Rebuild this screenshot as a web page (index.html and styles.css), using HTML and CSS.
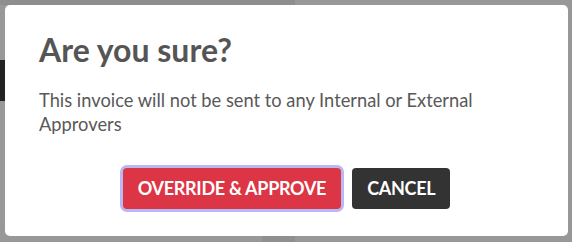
FILE: index.html
```html
<!DOCTYPE html>
<html lang="en">
<head>
<meta charset="utf-8">
<title>Are you sure?</title>
<link rel="stylesheet" href="styles.css">
</head>
<body>
<div class="page">
  <div class="topbar"></div>
  <div class="sidebar-item"></div>
  <div class="bottom-col"></div>
</div>
<div class="modal" role="dialog">
  <h1 class="modal-title">Are you sure?</h1>
  <p class="modal-text">This invoice will not be sent to any Internal or External Approvers</p>
  <div class="modal-actions">
    <button class="btn btn-danger">OVERRIDE &amp; APPROVE</button>
    <button class="btn btn-dark">CANCEL</button>
  </div>
</div>
</body>
</html>
```

FILE: styles.css
```css
html, body {
  margin: 0;
  padding: 0;
}
body {
  width: 572px;
  height: 242px;
  overflow: hidden;
  background: #989898;
  font-family: Lato, "Open Sans", "Liberation Sans", sans-serif;
  position: relative;
}
.page {
  display: flex;
  flex-direction: column;
  height: 242px;
}
.topbar {
  width: 295px;
  height: 5px;
  background: #8e8e8e;
}
.sidebar-item {
  width: 20px;
  height: 41px;
  margin-top: 55px;
  background: #222222;
}
.bottom-col {
  margin-top: auto;
  margin-left: 262px;
  width: 33px;
  height: 6px;
  background: #8f8f8f;
}
.modal {
  position: absolute;
  left: 5px;
  top: 5px;
  width: 563px;
  height: 231px;
  box-sizing: border-box;
  padding: 26px 34px 27px;
  background: #ffffff;
  border-radius: 5px;
  color: #555555;
}
.modal-title {
  margin: 0 0 19px;
  font-size: 32px;
  line-height: 38px;
  font-weight: 700;
  color: #555555;
}
.modal-text {
  margin: 0 0 32px;
  font-size: 18.3px;
  line-height: 24px;
  color: #595959;
}
.modal-actions {
  display: flex;
  justify-content: center;
  gap: 11px;
}
.btn {
  font-family: Lato, "Open Sans", "Liberation Sans", sans-serif;
  font-size: 18px;
  font-weight: 700;
  line-height: 27px;
  height: 41px;
  padding: 7px 15px;
  border: none;
  border-radius: 4px;
  color: #ffffff;
  box-sizing: border-box;
  letter-spacing: -0.3px;
}
.btn-danger {
  background: #dc3545;
  box-shadow: 0 0 0 3px #b8b8f6;
}
.btn-dark {
  background: #333333;
}
```
